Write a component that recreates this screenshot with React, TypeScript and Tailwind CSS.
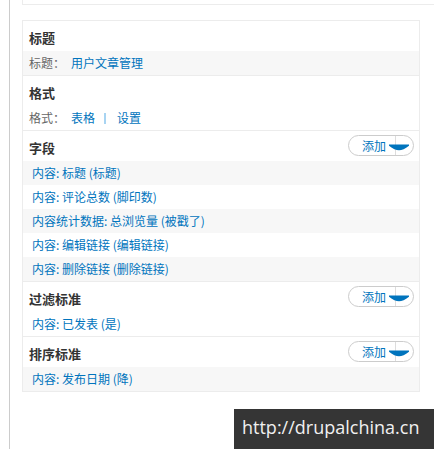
import React from "react";

const LINK = "text-[#0074bd]";

function AddButton() {
  return (
    <div className="relative mt-[4px] flex h-[21px] w-[66px] items-center rounded-full border border-[#cccccc] bg-white pl-[13px]">
      <span className={`${LINK} text-[12px] leading-none`}>添加</span>
      <span className="absolute left-[46px] top-0 h-full w-px bg-[#dddddd]" />
      <svg className="absolute left-[40px] top-[8px]" width="20" height="7" viewBox="0 0 20 7">
        <path d="M0 0.5 H20 V1.8 C16 5 13 6.2 10 6.2 C7 6.2 4 5 0 1.8 Z" fill="#0074bd" />
      </svg>
    </div>
  );
}

function Heading({ title, add }: { title: string; add?: boolean }) {
  return (
    <div className="flex h-[30px] items-start justify-between pl-[6px] pr-[5px]">
      <h3 className="pt-[9px] text-[13px] font-bold leading-[16px] text-[#333333]">{title}</h3>
      {add && <AddButton />}
    </div>
  );
}

function Item({ text, gray }: { text: string; gray?: boolean }) {
  return (
    <div className={`h-[24px] pl-[9px] leading-[24px] ${LINK} ${gray ? "bg-[#f7f7f7]" : "bg-white"}`}>
      {text}
    </div>
  );
}

export default function App() {
  return (
    <div className="relative h-[449px] w-[434px] overflow-hidden bg-white font-['Noto_Sans_CJK_SC','Noto_Sans',sans-serif] text-[12px]">
      <div className="ml-[9px] h-full border-l border-[#cccccc] pl-[12px]">
        <div className="h-[5px] border-b border-l border-[#ececec]" />
        <div className="mt-[15px] w-[398px] divide-y divide-[#ececec] border border-[#ececec]">
          <div>
            <Heading title="标题" />
            <div className="flex h-[24px] items-center bg-[#f7f7f7] pl-[6px]">
              <span className="inline-block w-[42px] text-[#666666]">标题：</span>
              <span className={LINK}>用户文章管理</span>
            </div>
          </div>
          <div>
            <Heading title="格式" />
            <div className="flex h-[24px] items-center bg-white pl-[6px]">
              <span className="inline-block w-[42px] text-[#666666]">格式：</span>
              <span className={LINK}>表格</span>
              <span className="ml-[9px] mr-[11px] inline-block h-[11px] w-[2px] bg-[#a8d4f2]" />
              <span className={LINK}>设置</span>
            </div>
          </div>
          <div>
            <Heading title="字段" add />
            <Item text="内容: 标题 (标题)" gray />
            <Item text="内容: 评论总数 (脚印数)" />
            <Item text="内容统计数据: 总浏览量 (被戳了)" gray />
            <Item text="内容: 编辑链接 (编辑链接)" />
            <Item text="内容: 删除链接 (删除链接)" gray />
          </div>
          <div>
            <Heading title="过滤标准" add />
            <Item text="内容: 已发表 (是)" />
          </div>
          <div>
            <Heading title="排序标准" add />
            <Item text="内容: 发布日期 (降)" gray />
          </div>
        </div>
      </div>
      <div className="absolute bottom-0 right-0 h-[40px] w-[200px] bg-[#353535] pl-[8px] font-['Open_Sans',sans-serif] text-[18px] leading-[36px] text-[#f0f0f0]">
        http://drupalchina.cn
      </div>
    </div>
  );
}
